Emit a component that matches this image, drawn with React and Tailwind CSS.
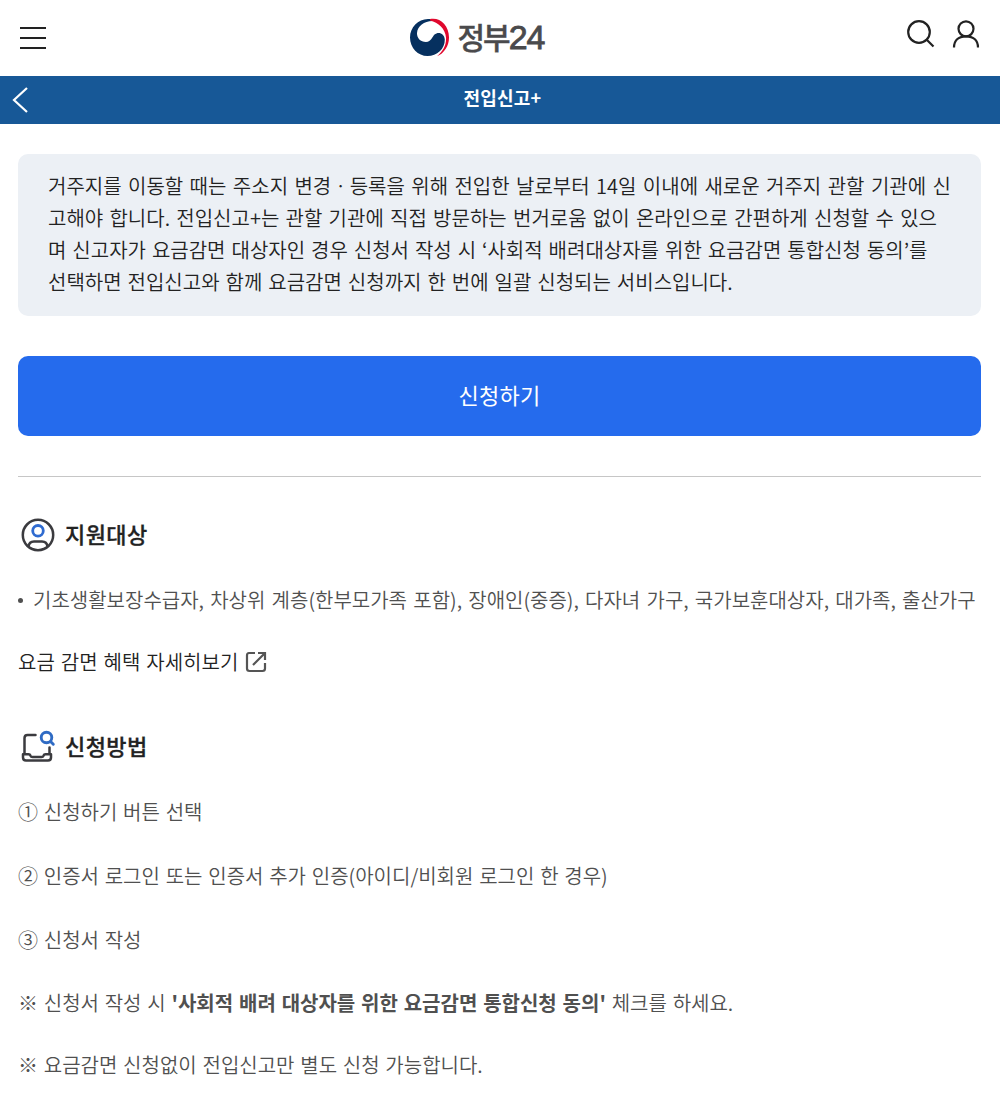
import React from "react";

function MenuIcon() {
  return (
    <svg width="26" height="24" viewBox="0 0 26 24" stroke="#222" strokeWidth="2">
      <path d="M0 2H26M0 12H26M0 22H26" />
    </svg>
  );
}

function GovMark() {
  return (
    <svg width="40" height="40" viewBox="0 0 40 40">
      <path d="M18 1C8 1 0 9.500 0 19.500C0 30 8 38 17.500 38C27 38 35 31 34.800 21.500C34.500 15.500 28.500 13 24.500 16.500C22 19 21.500 23.500 16 24C10.500 24 6.800 20 7 15C7.500 8 14 3 22.500 3L25 2C23 1.200 20.500 1 18 1Z" fill="#06305f" />
      <path d="M20 1C30-1 39 7 39 19.500C39 28 34 35.500 27 38.300C33 33 36.500 27 36 19.500C35.300 11 28.500 4.500 20 2.600Z" fill="#e0082d" />
    </svg>
  );
}

function SearchIcon() {
  return (
    <svg width="28" height="28" viewBox="0 0 28 28" fill="none" stroke="#222" strokeWidth="2.200">
      <circle cx="12" cy="12" r="10.800" />
      <path d="M19.500 19.500L26.500 26.500" />
    </svg>
  );
}

function UserIcon() {
  return (
    <svg width="28" height="28" viewBox="0 0 28 28" fill="none" stroke="#222" strokeWidth="2.200">
      <circle cx="14" cy="8.800" r="7.500" />
      <path d="M2 27.500C2 20 7 16.300 14 16.300S26 20 26 27.500" />
    </svg>
  );
}

function TargetIcon() {
  return (
    <svg width="34" height="34" viewBox="0 0 34 34" fill="none" stroke="#3b3b3f" strokeWidth="2.500">
      <circle cx="17" cy="17" r="15.200" />
      <circle cx="17" cy="12.800" r="5.300" stroke="#2f6bd0" strokeWidth="2.800" />
      <path d="M7.500 28.500C8 24.500 10.500 23.500 13 23.500H21C23.500 23.500 26 24.500 26.500 28.500" />
    </svg>
  );
}

function MethodIcon() {
  return (
    <svg className="overflow-visible" width="34" height="34" viewBox="0 0 34 34" fill="none" stroke="#3b3b3f" strokeWidth="2.500" strokeLinecap="round" strokeLinejoin="round">
      <path d="M14.500 5H6.500Q3.500 5 3.500 8V23M28.500 17.500V23" />
      <path d="M2 24.200H7.500Q9 24.200 9.500 25.700Q10 27 11.500 27H20.500Q22 27 22.500 25.700Q23 24.200 24.500 24.200H30V27.500Q30 30.500 27 30.500H5Q2 30.500 2 27.500Z" />
      <g stroke="#2f6bc4" strokeWidth="2.900"><circle cx="25.500" cy="7.500" r="5.300" /><path d="M29.500 11.500L32.300 14.300" /></g>
    </svg>
  );
}

function ExternalIcon() {
  return (
    <svg width="22" height="22" viewBox="0 0 22 22" fill="none" stroke="#555" strokeWidth="2.200">
      <path d="M10 2H4Q2 2 2 4.500V17.500Q2 20 4.500 20H17.500Q20 20 20 17.500V12M13 2H20V9M20 2L8 14" />
    </svg>
  );
}

const intro = [
  ["거주지를 이동할 때는 주소지 변경ㆍ등록을 위해 전입한 날로부터 14일 이내에 새로운 거주지 관할 기관에 신", "[word-spacing:1.95px]"],
  ["고해야 합니다. 전입신고+는 관할 기관에 직접 방문하는 번거로움 없이 온라인으로 간편하게 신청할 수 있으", "[word-spacing:1.8px]"],
  ["며 신고자가 요금감면 대상자인 경우 신청서 작성 시 ‘사회적 배려대상자를 위한 요금감면 통합신청 동의’를", "[word-spacing:1.5px]"],
  ["선택하면 전입신고와 함께 요금감면 신청까지 한 번에 일괄 신청되는 서비스입니다.", "[word-spacing:1.5px]"],
];

export default function App() {
  return (
    <div className="h-[1109px] overflow-hidden bg-white font-['Noto_Sans_CJK_KR',sans-serif] text-[20px] leading-8 font-[350] tracking-[0px] [word-spacing:1.5px] whitespace-nowrap text-[#222]">
      <header className="grid h-[76px] grid-cols-[1fr_auto_1fr] items-center pr-[20px] pl-[20px]">
        <button aria-label="메뉴"><MenuIcon /></button>
        <div className="flex items-center gap-[7px] pr-[45px]">
          <GovMark />
          <span className="pb-[4px] text-[30px] font-medium tracking-[-2px] text-[#4a4a4c] [-webkit-text-stroke:0.4px_#4a4a4c]">
            정부<span className="font-['Liberation_Sans',sans-serif] text-[34px] tracking-[-1px] [-webkit-text-stroke:0.8px_#4a4a4c]">24</span>
          </span>
        </div>
        <div className="flex justify-end gap-[17px] pb-[8px]">
          <button aria-label="검색"><SearchIcon /></button>
          <button aria-label="내 정보"><UserIcon /></button>
        </div>
      </header>
      <div className="grid h-12 grid-cols-[40px_1fr_40px] items-center bg-[#175897] text-white">
        <svg className="ml-[11px]" width="17" height="28" viewBox="0 0 17 28" fill="none" stroke="#fff" strokeWidth="2.200"><path d="M16 2L3 14L16 26" /></svg>
        <h1 className="pb-[6px] pl-[5px] text-center text-[18px] font-bold tracking-[0.2px]">전입신고+</h1>
      </div>
      <main className="px-[18px] pr-[19px] pt-[30px]">
        <section className="h-[162px] rounded-[10px] bg-[#ecf0f5] px-[30px] pt-[16px]">
          {intro.map(([line, spacing]) => <p key={line} className={spacing}>{line}</p>)}
        </section>
        <button className="mt-10 h-20 w-full rounded-[10px] bg-[#256bed] pb-[4px] text-[22px] font-normal tracking-[0.3px] text-white">신청하기</button>
        <hr className="mt-10 border-[#c6c6c6]" />
        <h2 className="mt-[40px] flex h-[36px] items-center gap-[10px] pl-[3px] text-[22px] font-medium tracking-[0.4px] [-webkit-text-stroke:0.3px_#222]"><TargetIcon /><span className="pb-[4px]">지원대상</span></h2>
        <div className="mt-[31px] flex items-center text-[#505050] [word-spacing:1.75px]">
          <span className="mr-[10px] size-[5px] rounded-full bg-[#505050]" />
          <p>기초생활보장수급자, 차상위 계층(한부모가족 포함), 장애인(중증), 다자녀 가구, 국가보훈대상자, 대가족, 출산가구</p>
        </div>
        <a className="mt-[30px] flex items-center gap-[7px]">요금 감면 혜택 자세히보기<ExternalIcon /></a>
        <h2 className="mt-[51px] flex h-[36px] items-center gap-[10px] pl-[3px] text-[22px] font-medium tracking-[0.4px] [-webkit-text-stroke:0.3px_#222]"><MethodIcon /><span className="pb-[4px]">신청방법</span></h2>
        <div className="mt-[31px] text-[#505050] [word-spacing:1.3px]">
          <p>① 신청하기 버튼 선택</p>
          <p className="mt-8">② 인증서 로그인 또는 인증서 추가 인증(아이디/비회원 로그인 한 경우)</p>
          <p className="mt-8">③ 신청서 작성</p>
          <p className="mt-[31px]">※ 신청서 작성 시 <b className="font-bold">'사회적 배려 대상자를 위한 요금감면 통합신청 동의'</b> 체크를 하세요.</p>
          <p className="mt-[30px]">※ 요금감면 신청없이 전입신고만 별도 신청 가능합니다.</p>
        </div>
      </main>
    </div>
  );
}
